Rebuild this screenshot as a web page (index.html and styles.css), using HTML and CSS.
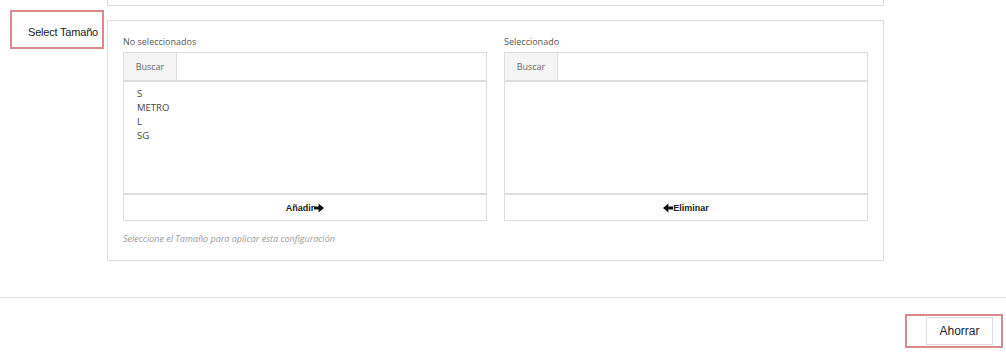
FILE: index.html
```html
<!DOCTYPE html>
<html lang="es">
<head>
  <meta charset="UTF-8" />
  <title>Select Tamaño</title>
  <link rel="stylesheet" href="styles.css">
</head>
<body>

  <!-- Panel anterior (cortado arriba) -->
  <div class="panel-previo"></div>

  <div class="fila">
    <div class="etiqueta">Select Tamaño</div>

    <div class="panel">
      <div class="columnas">
        <div class="columna">
          <div class="titulo">No seleccionados</div>
          <div class="caja">
            <div class="buscar">
              <span class="buscar-label">Buscar</span>
              <span class="buscar-input"></span>
            </div>
            <ul class="lista">
              <li>S</li>
              <li>METRO</li>
              <li>L</li>
              <li>SG</li>
            </ul>
            <button class="btn-mover">Añadir<svg class="flecha" viewBox="0 0 10 10" width="10" height="10"><path d="M0 3.4h4.6V0.6L10 5 4.6 9.4V6.6H0z"/></svg></button>
          </div>
        </div>

        <div class="columna">
          <div class="titulo">Seleccionado</div>
          <div class="caja">
            <div class="buscar">
              <span class="buscar-label">Buscar</span>
              <span class="buscar-input"></span>
            </div>
            <ul class="lista"></ul>
            <button class="btn-mover"><svg class="flecha" viewBox="0 0 10 10" width="10" height="10"><path d="M10 3.4H5.4V0.6L0 5 5.4 9.4V6.6H10z"/></svg>Eliminar</button>
          </div>
        </div>
      </div>
      <div class="ayuda">Seleccione el Tamaño para aplicar esta configuración</div>
    </div>
  </div>

  <div class="pie">
    <div class="guardar-marco">
      <button class="btn-guardar">Ahorrar</button>
    </div>
  </div>

</body>
</html>
```

FILE: styles.css
```css
body {
  margin: 0;
  font-family: 'Open Sans', 'Noto Sans', sans-serif;
  color: #333;
  background: #fff;
}

.panel-previo {
  margin-left: 107px;
  width: 775px;
  height: 5px;
  border: 1px solid #ddd;
  border-top: none;
}

.fila {
  display: flex;
  align-items: flex-start;
  padding-top: 4px;
}

.etiqueta {
  margin-left: 10px;
  width: 86px;
  height: 30px;
  padding: 5px 4px 0 0;
  border: 2px solid #d98b8b;
  display: flex;
  align-items: center;
  justify-content: flex-end;
  font-family: 'Liberation Sans', Arial, sans-serif;
  font-size: 11px;
  color: #222;
  letter-spacing: -0.2px;
}

.panel {
  margin-left: 3px;
  margin-top: 10px;
  width: 745px;
  height: 214px;
  padding: 12px 15px 13px;
  border: 1px solid #ddd;
}

.columnas {
  display: flex;
  gap: 17px;
}

.columna {
  width: 364px;
}

.titulo {
  font-size: 9px;
  color: #555;
  height: 19px;
  line-height: 18px;
}

.caja {
  border: 1px solid #ddd;
}

.buscar {
  display: flex;
  height: 27px;
  border-bottom: 2px solid #ddd;
}

.buscar-label {
  width: 52px;
  background: #f5f5f5;
  border-right: 1px solid #ddd;
  font-size: 9px;
  color: #666;
  display: flex;
  align-items: center;
  justify-content: center;
}

.buscar-input {
  flex: 1;
}

.lista {
  list-style: none;
  margin: 0;
  padding: 5px 13px 0;
  height: 106px;
  border-bottom: 2px solid #ddd;
  font-size: 9.5px;
  line-height: 14px;
  color: #444;
}

.btn-mover {
  display: flex;
  align-items: center;
  justify-content: center;
  width: 100%;
  height: 25px;
  border: none;
  background: #fff;
  font-family: 'Liberation Sans', Arial, sans-serif;
  font-size: 9px;
  font-weight: bold;
  color: #222;
  padding: 0;
}

.flecha {
  fill: #111;
}

.ayuda {
  margin-top: 11px;
  font-size: 9px;
  font-style: italic;
  color: #999;
}

.pie {
  margin-top: 36px;
  border-top: 1px solid #ddd;
  display: flex;
  justify-content: flex-end;
  padding-top: 16px;
}

.guardar-marco {
  margin-right: 3px;
  padding: 1px 8px 1px 19px;
  border: 2px solid #d98b8b;
}

.btn-guardar {
  width: 67px;
  height: 28px;
  background: #fff;
  border: 1px solid #ddd;
  font-family: 'Liberation Sans', Arial, sans-serif;
  font-size: 12px;
  color: #222;
  padding: 0;
}
```
